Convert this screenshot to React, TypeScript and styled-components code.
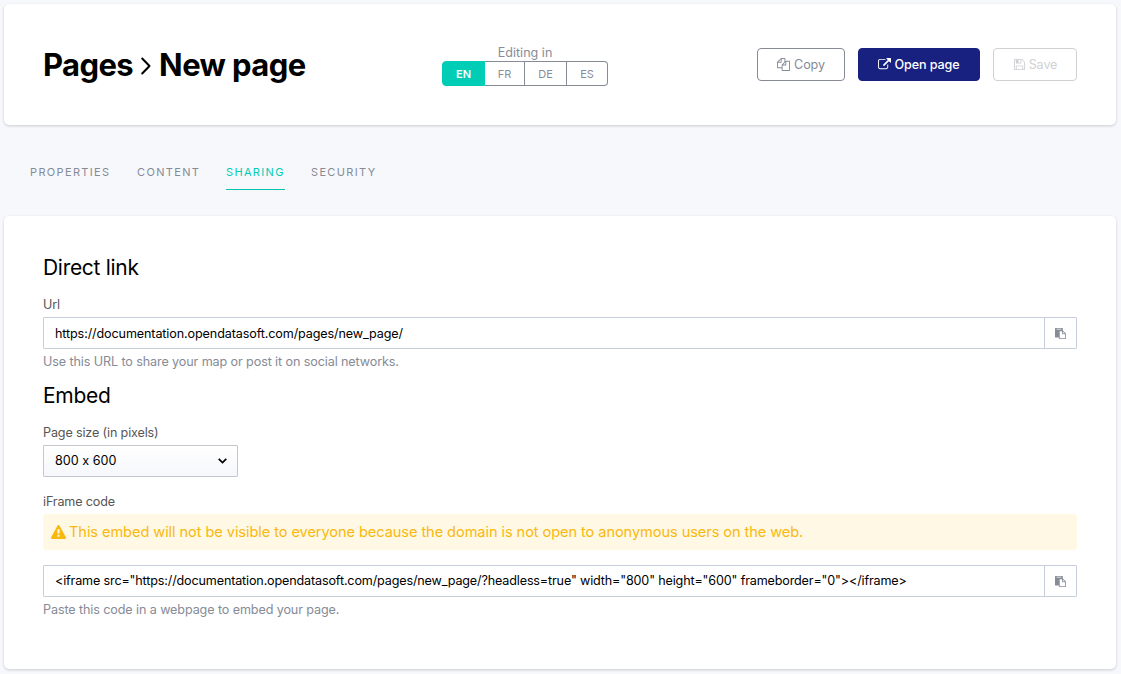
import React from "react";
import styled, { createGlobalStyle } from "styled-components";

const GlobalStyle = createGlobalStyle`
  * { box-sizing: border-box; }
  body {
    margin: 0;
    background: #f6f8fc;
    font-family: Inter, "Liberation Sans", sans-serif;
    font-size: 12.6px;
    font-feature-settings: "calt" 0;
    color: #000;
  }
`;

const Page = styled.div`
  width: 1121px;
  height: 674px;
  padding: 4px 5px 5px 4px;
  overflow: hidden;
  background: #f6f8fc;
`;

const Card = styled.section`
  background: #fff;
  border-radius: 5px;
  box-shadow: 0 1px 3px rgba(0, 0, 0, 0.18);
`;

const Header = styled(Card)`
  display: grid;
  grid-template-columns: 399px 166px 1fr;
  height: 121px;
  padding: 0 39px;
`;

const Title = styled.h1`
  display: flex;
  align-items: center;
  margin: 43px 0 0;
  height: 36px;
  font-size: 31px;
  line-height: 36px;
  font-weight: 700;
  letter-spacing: -0.6px;
  white-space: nowrap;
`;

const TitleChevron = styled.svg`
  width: 12px;
  height: 18px;
  margin: 2px 7px 0 7px;
`;

const Languages = styled.div`
  padding-top: 40px;
`;

const LanguagesLabel = styled.div`
  height: 17px;
  line-height: 17px;
  text-align: center;
  color: #898d98;
`;

const LanguageGroup = styled.div`
  display: grid;
  grid-template-columns: 43px 40px 42px 41px;
  height: 25px;
`;

const Language = styled.button<{ $active?: boolean }>`
  padding: 1px 0 0;
  border: 1px solid ${(p) => (p.$active ? "#00cdb5" : "#868b96")};
  border-left-width: ${(p) => (p.$active ? "1px" : "0")};
  background: ${(p) => (p.$active ? "#00cdb5" : "#fff")};
  color: ${(p) => (p.$active ? "#fff" : "#898d98")};
  font: ${(p) => (p.$active ? 600 : 400)} 11px/22px Inter, sans-serif;
  &:first-child { border-radius: 4px 0 0 4px; }
  &:last-child { border-radius: 0 4px 4px 0; }
`;

const Actions = styled.div`
  display: flex;
  justify-content: flex-end;
  gap: 13px;
  padding-top: 44px;
`;

const Button = styled.button<{ $kind?: "primary" | "disabled"; $width: number }>`
  display: flex;
  align-items: center;
  justify-content: center;
  gap: ${(p) => (p.$kind ? 3 : 4)}px;
  width: ${(p) => p.$width}px;
  height: 33px;
  padding: 0;
  border-radius: 4px;
  border: 1px solid ${(p) => (p.$kind === "primary" ? "#182080" : p.$kind === "disabled" ? "#cfd1d4" : "#868b96")};
  background: ${(p) => (p.$kind === "primary" ? "#182080" : "#fff")};
  color: ${(p) => (p.$kind === "primary" ? "#fff" : p.$kind === "disabled" ? "#cfd1d4" : "#868b96")};
  font: ${(p) => (p.$kind === "primary" ? 500 : 400)} 12.6px/16px Inter, sans-serif;
  letter-spacing: -0.1px;
  white-space: nowrap;
`;

const Glyph = styled.svg<{ $size: number }>`
  flex: none;
  width: ${(p) => p.$size}px;
  height: ${(p) => p.$size}px;
  fill: currentColor;
`;

const Tabs = styled.nav`
  display: flex;
  gap: 26px;
  height: 91px;
  padding: 37px 26px 0;
`;

const Tab = styled.a<{ $active?: boolean; $width: number }>`
  width: ${(p) => p.$width}px;
  height: 28px;
  border-bottom: 1px solid ${(p) => (p.$active ? "#00c6b0" : "transparent")};
  color: ${(p) => (p.$active ? "#00cdb5" : "#868b96")};
  font-size: 11px;
  line-height: 20px;
  letter-spacing: 1.35px;
  white-space: nowrap;
`;

const Content = styled(Card)`
  height: 453px;
  padding: 38px 39px;
`;

const Heading = styled.h2`
  margin: 0;
  height: 27px;
  font-size: 21px;
  line-height: 27px;
  font-weight: 400;
  letter-spacing: -0.3px;
`;

const Label = styled.label`
  display: block;
  height: 16px;
  margin-bottom: 4px;
  line-height: 16px;
  color: #565656;
  letter-spacing: -0.15px;
`;

const Hint = styled.p`
  margin: 5px 0 0;
  height: 16px;
  line-height: 16px;
  color: #868b96;
  letter-spacing: -0.11px;
`;

const Field = styled.div`
  margin-top: 16px;
`;

const CopyField = styled.div`
  display: flex;
  height: 32px;
  border: 1px solid #c7cedb;
  border-radius: 1px;
`;

const Value = styled.div<{ $code?: boolean }>`
  flex: 1;
  padding-left: 11px;
  line-height: ${(p) => (p.$code ? 30 : 32)}px;
  height: 30px;
  letter-spacing: ${(p) => (p.$code ? -0.155 : -0.12)}px;
  white-space: nowrap;
`;

const CopyButton = styled.button`
  display: flex;
  align-items: center;
  justify-content: center;
  width: 32px;
  padding: 1px 0 0;
  border: 0;
  border-left: 1px solid #c7cedb;
  background: #fff;
  color: #868b96;
`;

const Select = styled.div`
  display: flex;
  align-items: center;
  justify-content: space-between;
  width: 195px;
  height: 32px;
  padding: 0 10px 1px 11px;
  border: 1px solid #c5c7cc;
  border-radius: 1px;
  background: linear-gradient(#fff, #f6f7fc);
  line-height: 16px;
`;

const Warning = styled.div`
  display: flex;
  align-items: center;
  gap: 3px;
  height: 36px;
  margin: 0 0 15px;
  padding: 0 0 0 8px;
  border-radius: 3px;
  background: #fff8e5;
  color: #f9b80e;
  font-size: 14.6px;
  letter-spacing: -0.08px;
  white-space: nowrap;
`;

const paths = {
  copy: "M1696 384q40 0 68 28t28 68v1216q0 40-28 68t-68 28h-960q-40 0-68-28t-28-68v-288h-544q-40 0-68-28t-28-68v-672q0-40 20-88t48-76l408-408q28-28 76-48t88-20h416q40 0 68 28t28 68v328q68-40 128-40h416zm-544 213l-299 299h299v-299zm-640-384l-299 299h299v-299zm196 647l316-316v-416h-384v416q0 40-28 68t-68 28h-416v640h512v-256q0-40 20-88t48-76zm956 804v-1152h-384v416q0 40-28 68t-68 28h-416v640h896z",
  open: "M1408 928v320q0 119-84.5 203.5t-203.5 84.5h-832q-119 0-203.5-84.5t-84.5-203.5v-832q0-119 84.5-203.5t203.5-84.5h704q14 0 23 9t9 23v64q0 14-9 23t-23 9h-704q-66 0-113 47t-47 113v832q0 66 47 113t113 47h832q66 0 113-47t47-113v-320q0-14 9-23t23-9h64q14 0 23 9t9 23zm384-864v512q0 26-19 45t-45 19-45-19l-176-176-652 652q-10 10-23 10t-23-10l-114-114q-10-10-10-23t10-23l652-652-176-176q-19-19-19-45t19-45 45-19h512q26 0 45 19t19 45z",
  save: "M512 1536h768v-384h-768v384zm896 0h128v-896q0-14-10-38.5t-20-34.5l-281-281q-10-10-34-20t-39-10v416q0 40-28 68t-68 28h-576q-40 0-68-28t-28-68v-416h-128v1280h128v-416q0-40 28-68t68-28h832q40 0 68 28t28 68v416zm-384-928v-320q0-13-9.5-22.5t-22.5-9.5h-192q-13 0-22.5 9.5t-9.5 22.5v320q0 13 9.5 22.5t22.5 9.5h192q13 0 22.5-9.5t9.5-22.5zm640 32v928q0 40-28 68t-68 28h-1344q-40 0-68-28t-28-68v-1344q0-40 28-68t68-28h928q40 0 88 20t76 48l280 280q28 28 48 76t20 88z",
  warning: "M1024 1375v-190q0-14-9.5-23.5t-22.5-9.5h-192q-13 0-22.5 9.5t-9.5 23.5v190q0 14 9.5 23.5t22.5 9.5h192q13 0 22.5-9.5t9.5-23.5zm-2-374l18-459q0-12-10-19-13-11-24-11h-220q-11 0-24 11-10 7-10 21l17 457q0 10 10 16.5t24 6.5h185q14 0 23.5-6.5t10.5-16.5zm-14-934l768 1408q35 63-2 126-17 29-46.5 46t-63.5 17h-1536q-34 0-63.5-17t-46.5-46q-37-63-2-126l768-1408q17-31 47-49t65-18 65 18 47 49z",
  paste: "M768 1664h896v-640h-416q-40 0-68-28t-28-68v-416h-384v1152zm256-1440v-64q0-13-9.5-22.5t-22.5-9.5h-704q-13 0-22.5 9.5t-9.5 22.5v64q0 13 9.5 22.5t22.5 9.5h704q13 0 22.5-9.5t9.5-22.5zm256 672h299l-299-299v299zm512 128v672q0 40-28 68t-68 28h-960q-40 0-68-28t-28-68v-160h-544q-40 0-68-28t-28-68v-1344q0-40 28-68t68-28h1088q40 0 68 28t28 68v328q21 13 36 28l408 408q28 28 48 76t20 88z",
};

const Icon = ({ name, size = 13 }: { name: keyof typeof paths; size?: number }) => (
  <Glyph $size={size} viewBox="0 0 1792 1792" aria-hidden>
    <path d={paths[name]} />
  </Glyph>
);

const CopyRow = ({ value, code }: { value: string; code?: boolean }) => (
  <CopyField>
    <Value $code={code}>{value}</Value>
    <CopyButton aria-label="Copy to clipboard"><Icon name="paste" size={11} /></CopyButton>
  </CopyField>
);

const EmbedHeading = styled(Heading)`
  margin-top: 12px;
`;

const FrameField = styled(Field)`
  margin-top: 17px;
`;

export default function App() {
  return (
    <Page>
      <GlobalStyle />
      <Header as="header">
        <Title>
          <span>Pages</span>
          <TitleChevron viewBox="0 0 12 18" fill="none" stroke="#000" strokeWidth="2" strokeLinecap="round" strokeLinejoin="round">
            <path d="M2.2 1.5 9.5 9l-7.3 7.5" />
          </TitleChevron>
          <span>New page</span>
        </Title>
        <Languages>
          <LanguagesLabel>Editing in</LanguagesLabel>
          <LanguageGroup>
            <Language $active>EN</Language>
            <Language>FR</Language>
            <Language>DE</Language>
            <Language>ES</Language>
          </LanguageGroup>
        </Languages>
        <Actions>
          <Button $width={88}><Icon name="copy" />Copy</Button>
          <Button $width={122} $kind="primary"><Icon name="open" />Open page</Button>
          <Button $width={84} $kind="disabled"><Icon name="save" />Save</Button>
        </Actions>
      </Header>
      <Tabs>
        <Tab $width={81}>PROPERTIES</Tab>
        <Tab $width={63}>CONTENT</Tab>
        <Tab $width={59} $active>SHARING</Tab>
        <Tab $width={66}>SECURITY</Tab>
      </Tabs>
      <Content as="main">
        <Heading>Direct link</Heading>
        <Field>
          <Label>Url</Label>
          <CopyRow value="https://documentation.opendatasoft.com/pages/new_page/" />
          <Hint>Use this URL to share your map or post it on social networks.</Hint>
        </Field>
        <EmbedHeading>Embed</EmbedHeading>
        <Field>
          <Label>Page size (in pixels)</Label>
          <Select>
            800 x 600
            <svg width="9" height="6" viewBox="0 0 9 6" fill="none" stroke="#000" strokeWidth="1.7">
              <path d="m.7.8 3.8 3.7L8.3.8" />
            </svg>
          </Select>
        </Field>
        <FrameField>
          <Label>iFrame code</Label>
          <Warning>
            <Icon name="warning" size={15} />
            <span>This embed will not be visible to everyone because the domain is not open to anonymous users on the web.</span>
          </Warning>
          <CopyRow
            code
            value={'<iframe src="https://documentation.opendatasoft.com/pages/new_page/?headless=true" width="800" height="600" frameborder="0"></iframe>'}
          />
          <Hint>Paste this code in a webpage to embed your page.</Hint>
        </FrameField>
      </Content>
    </Page>
  );
}
